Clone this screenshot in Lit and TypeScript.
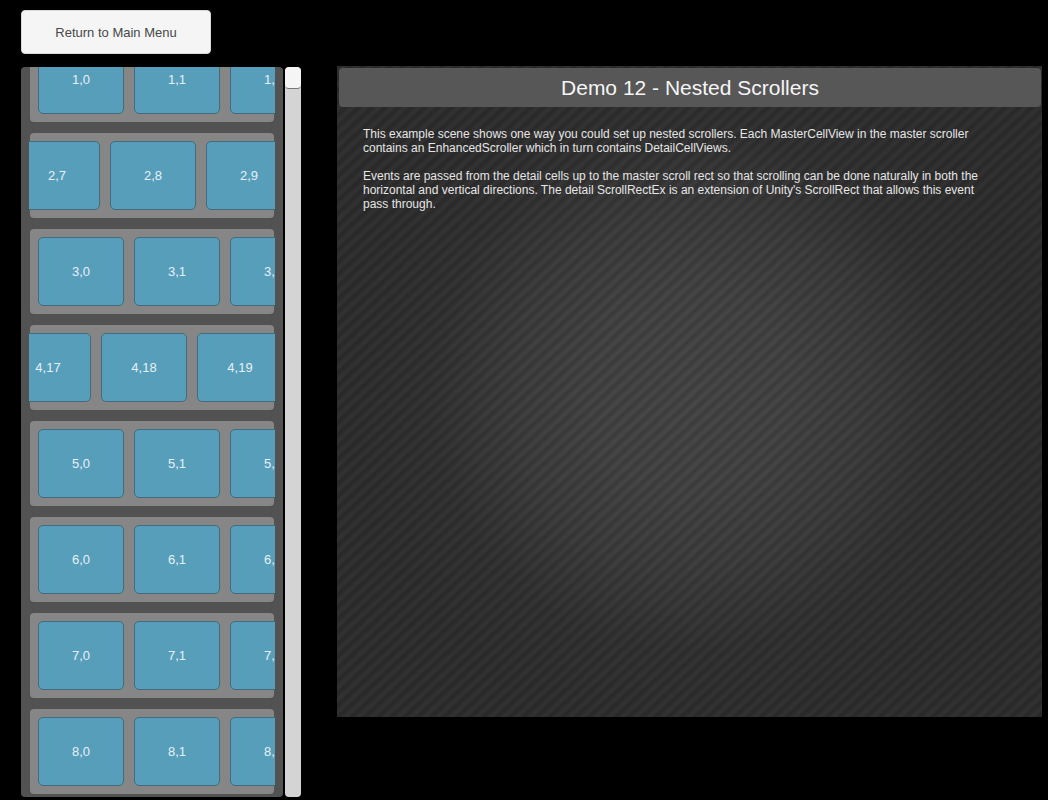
import { LitElement, html, css } from "lit";
import { customElement, property, query } from "lit/decorators.js";

interface Row {
  index: number;
  first: number;
  offset: number;
}

const ROWS: Row[] = [
  { index: 1, first: 0, offset: 0 },
  { index: 2, first: 7, offset: 24 },
  { index: 3, first: 0, offset: 0 },
  { index: 4, first: 17, offset: 33 },
  { index: 5, first: 0, offset: 0 },
  { index: 6, first: 0, offset: 0 },
  { index: 7, first: 0, offset: 0 },
  { index: 8, first: 0, offset: 0 },
];

/** One master row: a horizontal scroller of detail cells. */
@customElement("master-row")
export class MasterRow extends LitElement {
  @property({ type: Number }) index = 0;
  @property({ type: Number }) first = 0;
  @property({ type: Number }) offset = 0;
  @query(".track") track!: HTMLElement;

  static styles = css`
    :host {
      display: block;
      flex: none;
      margin: 0 1px;
      padding: 8px 0;
      border-radius: 4px;
      background: #868686;
    }
    .track {
      display: flex;
      gap: 10px;
      margin: 0 -1px;
      padding: 0 9px;
      overflow-x: auto;
      scrollbar-width: none;
    }
    .cell {
      flex: none;
      box-sizing: border-box;
      width: 86px;
      height: 69px;
      border: 1px solid #456b7c;
      border-radius: 5px;
      background: #579ebb;
      color: #e6f1f5;
      font-size: 13px;
      line-height: 67px;
      text-align: center;
    }
  `;

  firstUpdated() {
    this.track.scrollLeft = this.offset;
  }

  render() {
    return html`<div class="track">
      ${[0, 1, 2].map(
        (i) => html`<div class="cell">${this.index},${this.first + i}</div>`
      )}
    </div>`;
  }
}

@customElement("app-root")
export class AppRoot extends LitElement {
  @query(".list") list!: HTMLElement;

  static styles = css`
    :host {
      display: flex;
      flex-direction: column;
      box-sizing: border-box;
      height: 100vh;
      padding: 10px 6px 3px 21px;
      background: #000;
      font-family: "Liberation Sans", Arial, sans-serif;
    }
    .back {
      flex: none;
      align-self: flex-start;
      width: 190px;
      height: 44px;
      padding: 0;
      border: 1px solid #d8d8d8;
      border-radius: 4px;
      background: #f5f5f5;
      color: #484848;
      font: 13px "Liberation Sans", Arial, sans-serif;
    }
    .main {
      display: flex;
      flex: 1;
      min-height: 0;
      margin-top: 12px;
    }
    .list {
      display: flex;
      flex-direction: column;
      gap: 11px;
      flex: none;
      box-sizing: border-box;
      width: 262px;
      margin-top: 1px;
      padding: 0 8px 3px;
      border-radius: 4px;
      background: #525252;
      overflow-y: auto;
      scrollbar-width: none;
    }
    .bar {
      appearance: none;
      writing-mode: vertical-lr;
      flex: none;
      width: 16px;
      height: auto;
      margin: 1px 0 0 2px;
      border-radius: 4px;
      background: #d4d4d4;
      overflow: hidden;
    }
    .bar::-webkit-slider-thumb {
      appearance: none;
      box-sizing: border-box;
      width: 16px;
      height: 22px;
      border: 0 solid #777;
      border-bottom-width: 1px;
      border-radius: 4px;
      background: #f5f5f5;
    }
    .info {
      flex: 1;
      min-width: 0;
      margin: 0 0 80px 36px;
      padding: 2px 1px 0 2px;
      background:
        repeating-linear-gradient(
          137deg,
          rgba(0, 0, 0, 0.14) 0,
          rgba(255, 255, 255, 0.02) 5px,
          rgba(0, 0, 0, 0.14) 9px
        ),
        radial-gradient(
          circle at 50% 50%,
          #454545 0,
          #434343 100px,
          #3c3c3c 180px,
          #313131 260px,
          #2e2e2e 340px
        );
    }
    h1 {
      margin: 0;
      border-radius: 4px;
      background: #575757;
      color: #f5f5f5;
      font-size: 21px;
      font-weight: 400;
      line-height: 39px;
      text-align: center;
    }
    .text {
      padding: 20px 48px 20px 24px;
      color: #e6e6e6;
      font-size: 12px;
      line-height: 14px;
    }
    p {
      margin: 0 0 14px;
    }
  `;

  async firstUpdated() {
    const rows = this.renderRoot.querySelectorAll<MasterRow>("master-row");
    await Promise.all([...rows].map((r) => r.updateComplete));
    this.list.scrollTop = 30;
  }

  render() {
    return html`
      <button class="back" type="button">Return to Main Menu</button>
      <div class="main">
        <div class="list">
          ${ROWS.map(
            (r) => html`<master-row
              .index=${r.index}
              .first=${r.first}
              .offset=${r.offset}
            ></master-row>`
          )}
        </div>
        <input
          class="bar"
          type="range"
          min="0"
          max="100"
          value="0"
          aria-label="Scroll position"
        />
        <section class="info">
          <h1>Demo 12 - Nested Scrollers</h1>
          <div class="text">
            <p>
              This example scene shows one way you could set up nested
              scrollers. Each MasterCellView in the master scroller contains an
              EnhancedScroller which in turn contains DetailCellViews.
            </p>
            <p>
              Events are passed from the detail cells up to the master scroll
              rect so that scrolling can be done naturally in both the
              horizontal and vertical directions. The detail ScrollRectEx is an
              extension of Unity's ScrollRect that allows this event pass
              through.
            </p>
          </div>
        </section>
      </div>
    `;
  }
}
